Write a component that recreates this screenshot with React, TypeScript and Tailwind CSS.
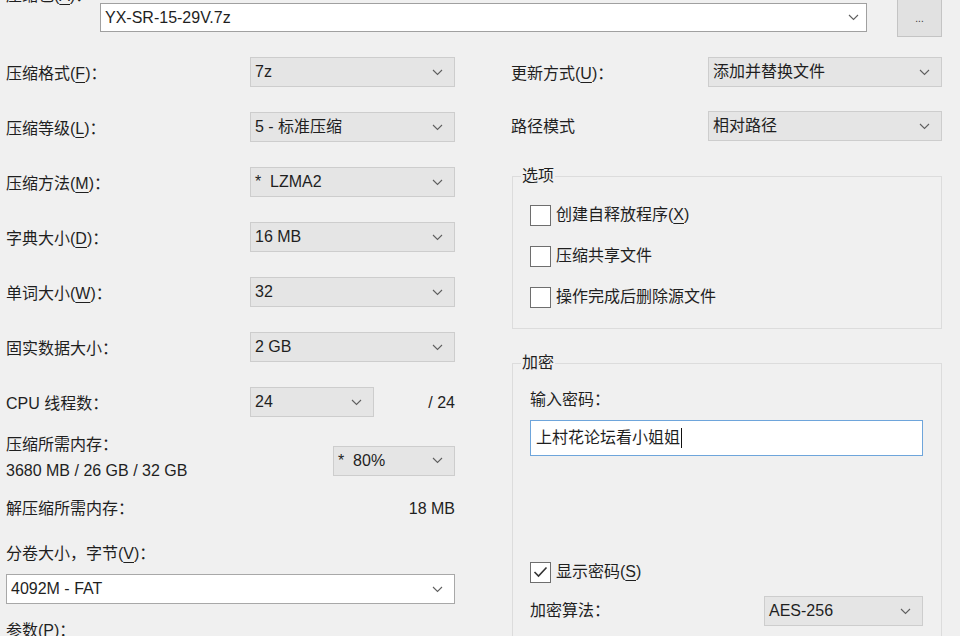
import type { ReactNode } from 'react'

function Chevron() {
  return (
    <svg width="11" height="7" viewBox="0 0 11 7" className="shrink-0">
      <polyline points="1,1 5.5,5.5 10,1" fill="none" stroke="#5f5f5f" strokeWidth="1.1" />
    </svg>
  )
}

function Key({ k }: { k: string }) {
  return <span className="underline decoration-1 underline-offset-[3px]">{k}</span>
}

function Select({ value, className = '', white = false }: { value: string; className?: string; white?: boolean }) {
  return (
    <div
      className={`flex h-[30px] items-center justify-between pl-[4px] pr-[11px] ${
        white ? 'border border-[#a8a8a8] bg-white' : 'border border-[#cdcdcd] bg-[#e5e5e5]'
      } ${className}`}
    >
      <span className="whitespace-pre">{value}</span>
      <Chevron />
    </div>
  )
}

function Checkbox({ checked = false, children }: { checked?: boolean; children: ReactNode }) {
  return (
    <div className="flex h-[20px] items-center gap-[5px]">
      <div className="flex h-[21px] w-[21px] items-center justify-center border border-[#6e6e6e] bg-white">
        {checked && (
          <svg width="15" height="12" viewBox="0 0 15 12">
            <polyline points="1.5,6 5.5,10 13.5,1.5" fill="none" stroke="#333" strokeWidth="1.6" />
          </svg>
        )}
      </div>
      <span>{children}</span>
    </div>
  )
}

function Row({ label, children }: { label: ReactNode; children: ReactNode }) {
  return (
    <div className="grid h-[30px] grid-cols-[244px_1fr] items-center">
      <span className="pt-[3px]">{label}</span>
      {children}
    </div>
  )
}

export default function App() {
  return (
    <div className="h-[636px] w-[960px] overflow-hidden bg-[#f0f0f0] font-[Liberation_Sans,Noto_Sans_CJK_SC,sans-serif] text-[16px] leading-[20px] text-[#1f1f1f]">
      {/* archive name */}
      <div className="flex items-start pl-[6px] pr-[18px]">
        <span className="-mt-[14px] w-[94px]">
          压缩包(<Key k="A" />)：
        </span>
        <div className="mt-[3px] flex h-[29px] flex-1 items-center justify-between border border-[#a0a0a0] bg-white pl-[4px] pr-[7px]">
          <span>YX-SR-15-29V.7z</span>
          <Chevron />
        </div>
        <div className="-mt-[8px] ml-[30px] flex h-[45px] w-[45px] items-end justify-center border border-[#c4c4c4] bg-[#e1e1e1] pb-[12px] text-[10px] leading-[10px] text-[#333]">
          ...
        </div>
      </div>

      <div className="mt-[20px] flex">
        {/* left column */}
        <div className="ml-[6px] flex w-[449px] flex-col">
          <div className="flex flex-col gap-[25px]">
            <Row label={<>压缩格式(<Key k="F" />)：</>}>
              <Select value="7z" />
            </Row>
            <Row label={<>压缩等级(<Key k="L" />)：</>}>
              <Select value="5 - 标准压缩" />
            </Row>
            <Row label={<>压缩方法(<Key k="M" />)：</>}>
              <Select value="*  LZMA2" />
            </Row>
            <Row label={<>字典大小(<Key k="D" />)：</>}>
              <Select value="16 MB" />
            </Row>
            <Row label={<>单词大小(<Key k="W" />)：</>}>
              <Select value="32" />
            </Row>
            <Row label="固实数据大小：">
              <Select value="2 GB" />
            </Row>
            <Row label="CPU 线程数：">
              <div className="flex items-center">
                <Select value="24" className="w-[124px]" />
                <span className="ml-auto pt-[2px]">/ 24</span>
              </div>
            </Row>
          </div>

          <div className="mt-[15px] flex items-center justify-between">
            <div className="leading-[26px]">
              <div>压缩所需内存：</div>
              <div>3680 MB / 26 GB / 32 GB</div>
            </div>
            <Select value="*  80%" className="mt-[5px] w-[122px]" />
          </div>

          <div className="mt-[15px] flex justify-between">
            <span>解压缩所需内存：</span>
            <span>18 MB</span>
          </div>

          <div className="mt-[25px]">
            分卷大小，字节(<Key k="V" />)：
          </div>
          <Select value="4092M - FAT" white className="mt-[10px]" />
          <div className="mt-[17px]">
            参数(<Key k="P" />)：
          </div>
        </div>

        {/* right column */}
        <div className="ml-[56px] flex w-[431px] flex-col">
          <div className="flex flex-col gap-[24px]">
            <div className="grid h-[30px] grid-cols-[197px_1fr] items-center">
              <span className="pt-[3px]">
                更新方式(<Key k="U" />)：
              </span>
              <Select value="添加并替换文件" />
            </div>
            <div className="grid h-[30px] grid-cols-[197px_1fr] items-center">
              <span className="pt-[2px]">路径模式</span>
              <Select value="相对路径" />
            </div>
          </div>

          <fieldset className="ml-[1px] mt-[25px] border border-[#dcdcdc]">
            <legend className="ml-[8px] px-[1px]">选项</legend>
            <div className="flex flex-col gap-[21px] pb-[21px] pl-[17px] pt-[19px]">
              <Checkbox>
                创建自释放程序(<Key k="X" />)
              </Checkbox>
              <Checkbox>压缩共享文件</Checkbox>
              <Checkbox>操作完成后删除源文件</Checkbox>
            </div>
          </fieldset>

          <fieldset className="ml-[1px] mt-[24px] border border-[#dcdcdc]">
            <legend className="ml-[8px] px-[1px]">加密</legend>
            <div className="flex flex-col pb-[60px] pl-[17px] pr-[18px] pt-[17px]">
              <span>输入密码：</span>
              <div className="mt-[10px] flex h-[36px] items-center border border-[#6ea5db] bg-white pl-[5px]">
                <span>上村花论坛看小姐姐</span>
                <span className="ml-[1px] h-[20px] w-px bg-[#111]" />
              </div>
              <div className="mt-[106px]">
                <Checkbox checked>
                  显示密码(<Key k="S" />)
                </Checkbox>
              </div>
              <div className="mt-[14px] flex items-center justify-between">
                <span>加密算法：</span>
                <Select value="AES-256" className="w-[159px]" />
              </div>
            </div>
          </fieldset>
        </div>
      </div>
    </div>
  )
}
